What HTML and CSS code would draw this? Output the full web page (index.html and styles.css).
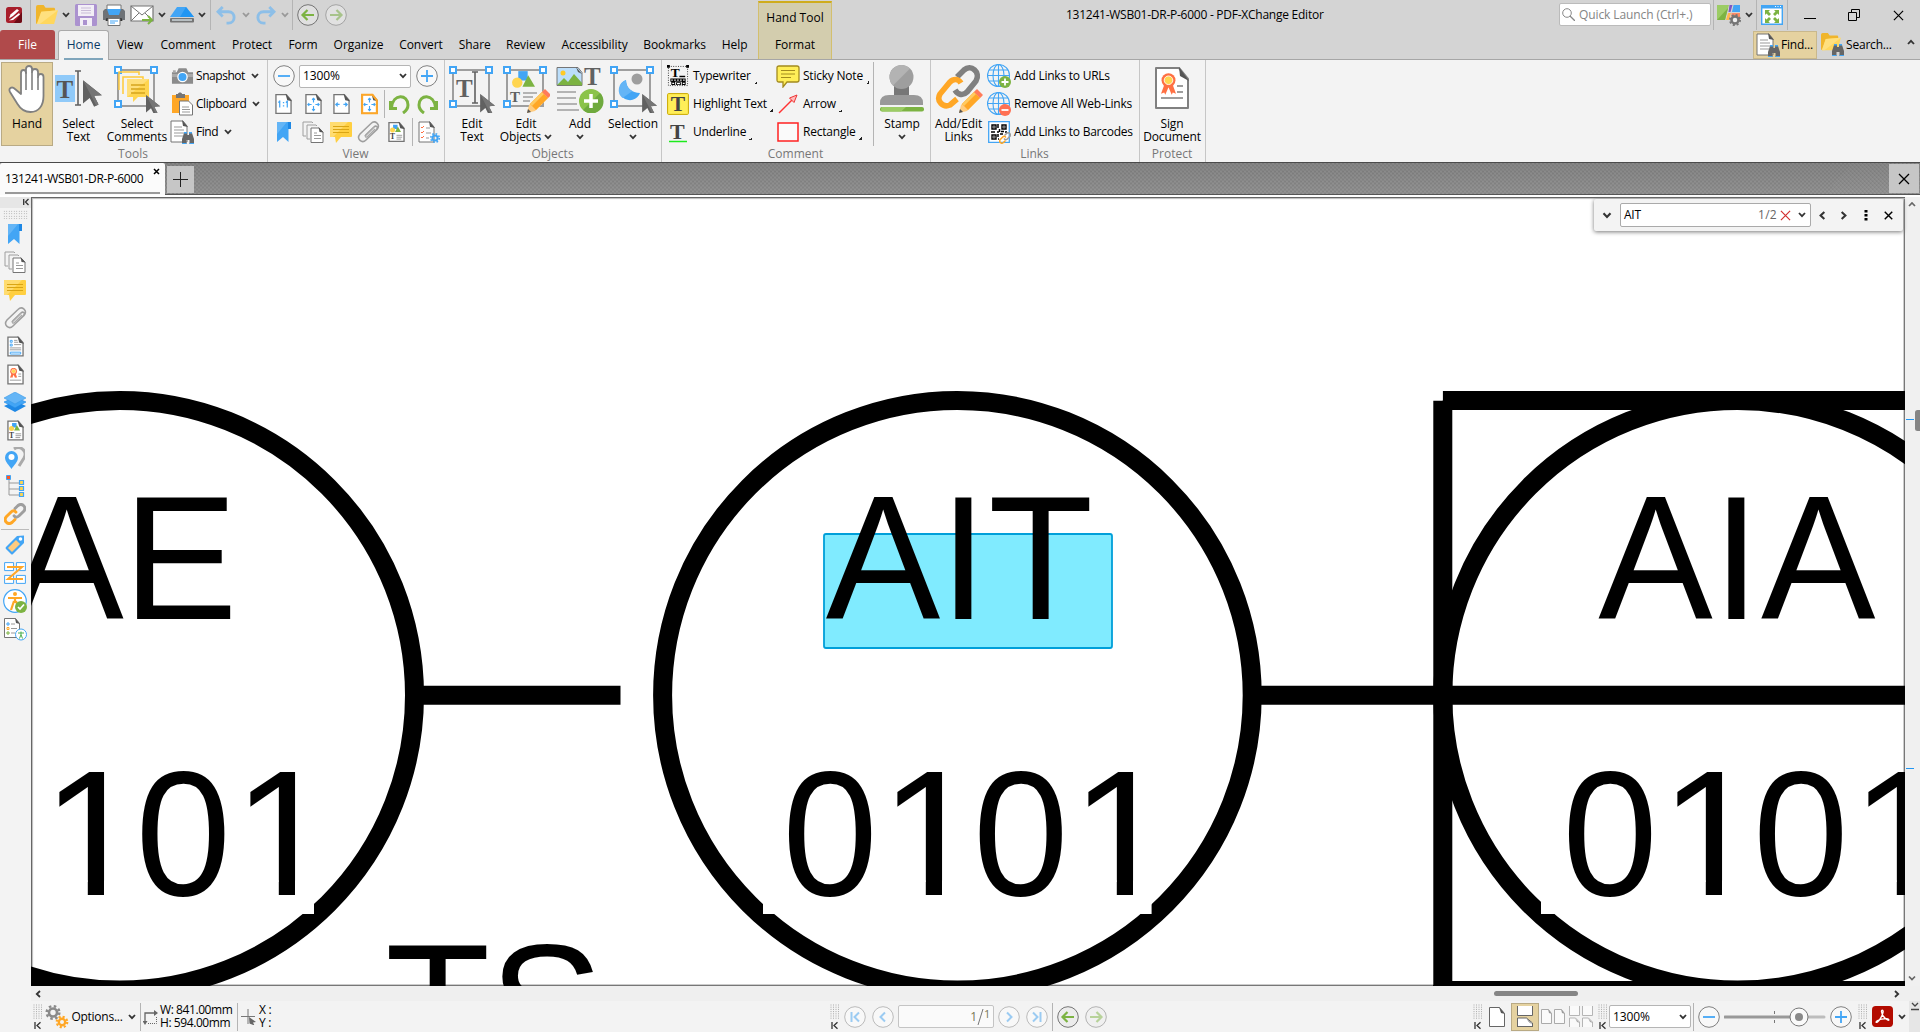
FILE: index.html
```html
<!DOCTYPE html>
<html lang="en">
<head>
<meta charset="utf-8">
<title>131241-WSB01-DR-P-6000 - PDF-XChange Editor</title>
<link rel="stylesheet" href="styles.css">
</head>
<body>
<svg class="defs" aria-hidden="true">
  <defs>
    <symbol id="chev" viewBox="0 0 8 6"><path d="M1 1l3 3.2L7 1" fill="none" stroke="currentColor" stroke-width="1.8"/></symbol>
    <symbol id="x" viewBox="0 0 12 12"><path d="M1 1l10 10M11 1L1 11" fill="none" stroke="currentColor" stroke-width="1.3"/></symbol>
    <symbol id="grip" viewBox="0 0 10 26"><path d="M1 .5v15M3.5 .5v15M6 .5v15M8.500 .5v15" stroke="#aaa" stroke-dasharray="1 1.2"/><path d="M2 18v7" stroke="#333" stroke-width="1.3"/><path d="M7.500 18.300L4 21.500l3.500 3.200" fill="none" stroke="#333" stroke-width="1.3"/></symbol>
    <symbol id="cursor" viewBox="0 0 18 24"><path d="M0 0l17 13.500-7 .5 4 8-4 2-4-8-6 5z" fill="#616161"/><path d="M0 0l17 13.500-7 .5 4 8-2 1z" fill="#757575"/></symbol>
    <symbol id="bino" viewBox="0 0 12 12"><path d="M2 1h3v2h2V1h3l2 6v5H7.500V8h-3v4H0V7z" fill="#666"/><path d="M2 0h3v1.500H2zM7 0h3v1.500H7zM0 11h4.500v1H0zM7.500 11H12v1H7.500z" fill="#42a5f5"/></symbol>
    <symbol id="pencil" viewBox="0 0 24 24"><path d="M0 24l2-8L17 1l6 6L8 22z" fill="#ffcc80"/><path d="M3 15L15 3l6 6L9 21z" fill="#ffa726"/><path d="M3 15L15 3l2 2L5 17z" fill="#ffca60"/><path d="M15 3l3-3 6 6-3 3z" fill="#ff7b5a"/><path d="M0 24l1-4 3 3z" fill="#555"/></symbol>
    <symbol id="page" viewBox="0 0 18 22"><path d="M1 1h11l5 6v14H1z" fill="#fff" stroke="#757575" stroke-width="1.400"/><path d="M11 0l7 8-5-1z" fill="#555"/></symbol>
    <symbol id="frame" viewBox="0 0 48 48"><path d="M5 5h36v36H5z" fill="none" stroke="#9e9e9e" stroke-width="2"/><path d="M2 2h6v6H2zM38 2h6v6h-6zM2 36h6v6H2z" fill="#fff" stroke="#42a5f5" stroke-width="2"/></symbol>
    <symbol id="shapes" viewBox="0 0 22 17"><path d="M6 0h9v9H6z" fill="#42a5f5"/><circle cx="5" cy="11" r="5" fill="#ffd54f"/><path d="M10 15L15.500 4 22 15z" fill="#7cb342"/></symbol>

    <symbol id="logo" viewBox="0 0 16 16"><rect width="16" height="16" rx="2.500" fill="#a81e2b"/><path d="M8 16L16 5v8.500a2.500 2.500 0 0 1-2.500 2.500z" fill="#6d0b15"/><path d="M3 11.500l1.500-4L11 2l2 1.500-6 5.500z" fill="#fff"/><path d="M3 13.500l3-2L13 6l1 1.500L7 13z" fill="#fff"/></symbol>
    <symbol id="folder" viewBox="0 0 24 22"><path d="M1 2q0-2 2-2h6l2 3h9q1 0 1 2v3H1z" fill="#f0b52c"/><path d="M1 4v14q0 2 1.500 2L7 8z" fill="#f0b52c"/><path d="M6.500 7L24 5.500 20 20H2z" fill="#ffd75e"/><path d="M6.500 7L24 5.500 5 20H2z" fill="#ffe07f"/></symbol>
    <symbol id="save" viewBox="0 0 22 22"><rect width="22" height="22" rx="1.500" fill="#ab92cf"/><path d="M3 1h16v11H3zM5 14h12v8H5z" fill="#f2eef6"/><path d="M6 4h10M6 6.500h10M6 9h10" stroke="#c9bcd8"/><path d="M8 16h4v5H8z" fill="#ab92cf"/></symbol>
    <symbol id="printer" viewBox="0 0 22 22"><path d="M4 1h14v6H4z" fill="#fff" stroke="#757575"/><path d="M2 5h18l2 2v9H0V7z" fill="#6e7276"/><path d="M4 5h14l-2 6H6z" fill="#42a5f5"/><path d="M3.500 14h15l1 3h-17z" fill="#333"/><path d="M5 14.500h12V21.500H5z" fill="#fff" stroke="#757575"/><path d="M7 17h8M7 19h5" stroke="#42a5f5"/></symbol>
    <symbol id="mail" viewBox="0 0 24 20"><path d="M1 1h22v15H1z" fill="#fff" stroke="#757575" stroke-width="1.200"/><path d="M1 1l11 9L23 1M1 16l8-8M23 16l-8-8" fill="none" stroke="#757575"/><path d="M12 15h9M18 11l4 4-4 4" fill="none" stroke="#7cb342" stroke-width="2"/></symbol>
    <symbol id="scan" viewBox="0 0 24 16"><path d="M7 0h9l8 10H0z" fill="#42a5f5"/><path d="M16 0l8 10H10z" fill="#2196f3"/><rect y="11" width="24" height="4.500" rx="1" fill="#757575"/><path d="M2 13h20" stroke="#cfd8dc" stroke-width="1.500"/></symbol>
    <symbol id="undo" viewBox="0 0 22 20"><path d="M7 1L2 6l5 5M2.500 6H13c8 0 8 12 0 12h-2" fill="none" stroke="#8dbfe8" stroke-width="3"/></symbol>
    <symbol id="back" viewBox="0 0 22 22"><circle cx="11" cy="11" r="10.300" fill="#e8e8e8" fill-opacity=".6" stroke="#757575"/><path d="M17 11H6M10.500 6L5.500 11l5 5" fill="none" stroke="#7cb342" stroke-width="2.200"/></symbol>
    <symbol id="fwd" viewBox="0 0 22 22"><g opacity=".5"><circle cx="11" cy="11" r="10.300" fill="#eee" stroke="#757575"/><path d="M5 11h11M11.500 6l5 5-5 5" fill="none" stroke="#7cb342" stroke-width="2.200"/></g></symbol>
    <symbol id="lens" viewBox="0 0 13 13"><circle cx="5" cy="5" r="4.300" fill="none" stroke="#888"/><path d="M8 8l5 5" stroke="#888" stroke-width="1.300"/></symbol>
    <symbol id="themes" viewBox="0 0 24 22"><path d="M0 1h12L8 16H0z" fill="#9ccc65"/><path d="M0 16L11 4 8 16z" fill="#7cb342"/><path d="M12.500 1h3l-2 7h-2z" fill="#7e57c2"/><path d="M16.500 1H23v7h-8z" fill="#42a5f5"/><path d="M11 9h3l-2 7H9z" fill="#ffb74d"/><path d="M14.500 9H23v7h-9z" fill="#ff8a65"/><circle cx="18" cy="16" r="3.500" fill="#eee" stroke="#757575" stroke-width="2.500"/><circle cx="18" cy="16" r="5" fill="none" stroke="#757575" stroke-width="2" stroke-dasharray="2 1.930"/></symbol>
    <symbol id="full" viewBox="0 0 22 20"><path d="M.7 .7h20.600v18.600H.7z" fill="#fff" stroke="#42a5f5" stroke-width="1.400"/><path d="M0 0h22v3.500H0z" fill="#42a5f5"/><path d="M14 1.500h6" stroke="#fff" stroke-dasharray="1 1.500"/><path d="M4 5h5L7.500 6.500 10 9 8 11 5.500 8.500 4 10zM18 5h-5l1.500 1.500L12 9l2 2 2.500-2.500L18 10zM4 18h5l-1.500-1.500L10 14l-2-2-2.500 2.500L4 13zM18 18h-5l1.500-1.500L12 14l2-2 2.500 2.500L18 13z" fill="#7cb342"/></symbol>

    <symbol id="hand" viewBox="0 0 38 48"><path d="M13 29V8c0-4 5-4 5 0V4c0-4 6-4 6 0v3c0-4 6-4 6 0v5c0-4 5.500-4 5.500 0v19c0 10-5 16-13 16-6 0-10-3-13-8L2 27c-2-4 2-6 5-3z" fill="#fff" stroke="#808080" stroke-width="1.800" stroke-linejoin="round"/><path d="M18 7v18M24 7v18M30 12v13" stroke="#808080" stroke-width="1.600"/></symbol>
    <symbol id="seltext" viewBox="0 0 48 48"><path d="M0 10h20v27H0z" fill="#90caf9"/><text x="1.500" y="33" class="g-serif" font-size="25" fill="#555">T</text><path d="M20 6h6M20 40h6M23 6v34" stroke="#616161" stroke-width="1.600"/><use href="#cursor" x="28" y="11" width="20" height="35"/></symbol>
    <symbol id="selcom" viewBox="0 0 48 48"><use href="#frame" width="48" height="48"/><path d="M6 25V7h20v3M10 29V12h20v3" fill="none" stroke="#ffca3a" stroke-width="1.500"/><path d="M14 14h22v18H25l-5 5v-5h-6z" fill="#ffd54f"/><path d="M14 32L36 14H14z" fill="#ffdf7a"/><path d="M18 20h14M18 24h14M18 28h14" stroke="#d6a51e" stroke-width="1.300"/><use href="#cursor" x="33" y="30" width="15" height="20"/></symbol>
    <symbol id="camera" viewBox="0 0 24 18"><path d="M1 5h5l2-4h8l2 4h5v12H1z" fill="#8b8b8b"/><path d="M2 3h3v2H2zM1 7h22v3H1z" fill="#aaa"/><circle cx="12" cy="10" r="5.500" fill="#fff"/><circle cx="12" cy="10" r="4.200" fill="#42a5f5"/></symbol>
    <symbol id="clipb" viewBox="0 0 22 24"><path d="M1 3h17v18H1z" fill="#ffa726"/><path d="M5 2h2c0-2 4-2 4 0h3v4H5z" fill="#757575"/><path d="M8.500 9h9l4 4v10h-13z" fill="#fff" stroke="#757575"/><path d="M11 15h7M11 17.500h8M11 20h8" stroke="#999"/></symbol>
    <symbol id="finddoc" viewBox="0 0 24 24"><path d="M1 1h12l4 5v16H1z" fill="#fff" stroke="#757575"/><path d="M12 0l6 7-5-1z" fill="#555"/><path d="M4 7h8M4 10h10M4 13h10M4 16h9" stroke="#999"/><use href="#bino" x="12" y="12" width="12" height="12"/></symbol>
    <symbol id="minus" viewBox="0 0 22 22"><circle cx="11" cy="11" r="10.300" fill="#f8f8f8" stroke="#808080"/><path d="M5 11h12" stroke="#42a5f5" stroke-width="1.800"/></symbol>
    <symbol id="plus" viewBox="0 0 22 22"><circle cx="11" cy="11" r="10.300" fill="#f8f8f8" stroke="#808080"/><path d="M5 11h12M11 5v12" stroke="#42a5f5" stroke-width="1.800"/></symbol>
    <symbol id="p11" viewBox="0 0 18 22"><use href="#page" width="18" height="22"/><path d="M5 8v6M13 8v6M4 9l1-1M12 9l1-1M9 9.500h.1M9 13h.1" stroke="#42a5f5" stroke-width="1.300" stroke-linecap="square"/></symbol>
    <symbol id="pall" viewBox="0 0 18 22"><use href="#page" width="18" height="22"/><path d="M9 5v4.500M9 13v5M3 11.500h4M11 11.500h4M7.500 6.500L9 5l1.500 1.500M7.500 16.500L9 18l1.500-1.500M4.500 10L3 11.500 4.500 13M13.500 10l1.500 1.500-1.500 1.500" fill="none" stroke="#42a5f5" stroke-width="1.200"/></symbol>
    <symbol id="pwid" viewBox="0 0 18 22"><use href="#page" width="18" height="22"/><path d="M3 11.500h4M11 11.500h4M5 9.500l-2 2 2 2M13 9.500l2 2-2 2" fill="none" stroke="#42a5f5" stroke-width="1.300"/></symbol>
    <symbol id="pvis" viewBox="0 0 18 22"><use href="#pall" width="18" height="22"/><path d="M1.200 1.200h11l4.600 6v13.600H1.200z" fill="none" stroke="#ffa726" stroke-width="2.200"/></symbol>
    <symbol id="rot" viewBox="0 0 22 20"><path d="M2.500 7v7.500H9M3.500 13.500C5-1 20 0 20 11c0 4-2 6-5 8" fill="none" stroke="#7cb342" stroke-width="3"/></symbol>
    <symbol id="bm" viewBox="0 0 16 22"><path d="M1 1h10v0h4v7h-2.500v13L7 16l-6 5z" fill="#42a5f5"/><path d="M1 1h10L1 13z" fill="#64b5f6"/><path d="M12 1h3v7h-3z" fill="#1e88e5"/></symbol>
    <symbol id="pages" viewBox="0 0 22 22"><path d="M4 15H1V1h9l1 1M8 18H5V4h9l1 1" fill="none" stroke="#9e9e9e"/><path d="M9 7h8l4 4v10.500H9z" fill="#fff" stroke="#757575"/><path d="M16.500 6l5 5.500-4-.5z" fill="#555"/><path d="M12 12h3M12 14.500h7M12 17.500h7" stroke="#999"/></symbol>
    <symbol id="comm" viewBox="0 0 22 21"><rect width="22" height="15" rx="1" fill="#ffcf40"/><path d="M5 15h6l-5 6z" fill="#ffcf40"/><path d="M1 0h17L3 15H0V1z" fill="#ffdc70"/><path d="M3 4.500h16M3 7.500h16M3 10.500h16" stroke="#d9a514"/></symbol>
    <symbol id="clip" viewBox="0 0 23 22"><path d="M8 15L17 6c2-2 4.500 0 2.500 2.500L9 19c-4 4-10-1-6-6L14 2.500c4-4 10 1 6 6L11 17" fill="none" stroke="#9e9e9e" stroke-width="1.500"/><path d="M17 6L9 13.500c-2 2 0 3.500 1.500 2L18 8" fill="none" stroke="#aaa" stroke-width="1.200"/></symbol>
    <symbol id="content" viewBox="0 0 18 22"><use href="#page" width="18" height="22"/><use href="#shapes" x="2" y="3" width="12" height="9"/><text x="2" y="18.500" class="g-serif" font-size="8" fill="#444">T</text><path d="M9 14.500h6M9 16.500h6M9 18.500h5" stroke="#999"/></symbol>
    <symbol id="docset" viewBox="0 0 22 22"><path d="M1 1h11l4 5v15H1z" fill="#fff" stroke="#757575"/><path d="M11 0l6 7-5-1z" fill="#555"/><path d="M3 6l1 1 2-2M3 11l1 1 2-2M3 16l1 1 2-2" fill="none" stroke="#ff7043"/><path d="M8 7h4M8 12h5M8 17h3" stroke="#999"/><circle cx="17" cy="17" r="2.600" fill="none" stroke="#42a5f5" stroke-width="2"/><circle cx="17" cy="17" r="4.300" fill="none" stroke="#42a5f5" stroke-width="1.500" stroke-dasharray="1.700 1.680"/></symbol>
    <symbol id="edtext" viewBox="0 0 48 48"><use href="#frame" width="48" height="48"/><text x="8" y="32" class="g-serif" font-size="25" fill="#616161">T</text><path d="M24 7h6M24 38h6M27 7v31" stroke="#616161" stroke-width="1.600"/><use href="#cursor" x="32" y="29" width="16" height="21"/></symbol>
    <symbol id="edobj" viewBox="0 0 48 48"><use href="#frame" width="48" height="48"/><use href="#shapes" x="10" y="6" width="23" height="18"/><text x="8" y="37" class="g-serif" font-size="15" fill="#616161">T</text><path d="M21 28h14M21 32h10M21 36h7" stroke="#9e9e9e" stroke-width="1.500"/><use href="#pencil" x="25" y="24" width="24" height="24"/></symbol>
    <symbol id="add" viewBox="0 0 48 48"><path d="M1 2.500h21l4 5v13H1z" fill="#bbdefb" stroke="#757575"/><circle cx="7" cy="8" r="2.500" fill="#ffca28"/><path d="M1 20l7-7 4 4 6-8 8 9v2.500z" fill="#7cb342"/><path d="M20 2l6 7-4-2z" fill="#555"/><text x="28" y="20" class="g-serif" font-size="25" fill="#616161">T</text><path d="M1 27h19M1 33h19M1 39h20M1 45h22" stroke="#9e9e9e" stroke-width="1.700"/><circle cx="35" cy="36" r="12" fill="#8bc34a"/><path d="M27 45a12 12 0 0 0 17-17z" fill="#6faa3e"/><path d="M28 36h14M35 29v14" stroke="#fff" stroke-width="3.500"/></symbol>
    <symbol id="selobj" viewBox="0 0 48 48"><use href="#frame" width="48" height="48"/><circle cx="28" cy="14" r="5.500" fill="#9e9e9e"/><path d="M17 15a10.500 10.500 0 1 0 14 13c-8 0-14-5-14-13z" fill="#42a5f5"/><path d="M17 15a10.500 10.500 0 0 0-3.500 18l10-7c-4-2-6.500-6-6.500-11z" fill="#64b5f6"/><use href="#cursor" x="33" y="29" width="16" height="21"/></symbol>
    <symbol id="typew" viewBox="0 0 23 23"><path d="M1.500 1.500h20v20h-20z" fill="none" stroke="#333" stroke-dasharray="1 1.500"/><path d="M0 0h3v3H0zM20 0h3v3h-3z" fill="#000"/><text x="4" y="13" class="g-serif" font-size="14">T</text><path d="M13 12h6" stroke="#000" stroke-width="1.500"/><path d="M3.500 14h16v3.500h-16zM4.500 17.500h4v3.500h-4zM9.500 18h5v3h-5zM15.500 17.500h4v3.500h-4z"/><path d="M4.500 15.800h14" stroke="#fff" stroke-width="1.400" stroke-dasharray="1.500 1.600"/><path d="M5.500 19.300h2M10.500 19.500h3M16.500 19.300h2" stroke="#fff" stroke-width="1.300"/></symbol>
    <symbol id="hilite" viewBox="0 0 22 22"><rect x=".6" y=".6" width="20.800" height="20.800" rx="1" fill="#ffee58" stroke="#c9a800"/><text x="3.700" y="18" class="g-serif" font-size="21.500" fill="#444">T</text></symbol>
    <symbol id="uline" viewBox="0 0 20 21"><text x="2" y="16.500" class="g-serif" font-size="22" fill="#444">T</text><path d="M1 19.500h18" stroke="#1dea1d" stroke-width="1.500"/></symbol>
    <symbol id="sticky" viewBox="0 0 24 23"><path d="M3 1h18q2 0 2 2v12q0 2-2 2H11l-4 5v-5H3q-2 0-2-2V3q0-2 2-2z" fill="#ffee58" stroke="#a38b1e" stroke-width="1.300"/><path d="M5 5.500h14M5 9h14M5 12.500h10" stroke="#a38b1e" stroke-width="1.200"/></symbol>
    <symbol id="arrow" viewBox="0 0 20 20"><path d="M1 19L17 3" stroke="#f33" stroke-width="1.400"/><path d="M19 1l-7.500 3L16 8.500z" fill="#fbb" stroke="#e33"/></symbol>
    <symbol id="rect" viewBox="0 0 22 20"><path d="M1 1h20v18H1z" fill="#fafafa" stroke="#f22" stroke-width="1.500"/></symbol>
    <symbol id="stamp" viewBox="0 0 46 48"><path d="M15 20c4 4 11 4 15 0v10H15z" fill="#777"/><circle cx="22.500" cy="12" r="12" fill="#9e9e9e"/><path d="M31 3.500A12 12 0 0 0 14 20.500z" fill="#b3b3b3"/><path d="M1 40v-2q0-8 9-8h25q9 0 9 8v2z" fill="#999"/><rect x="1" y="42" width="44" height="4.500" rx="2" fill="#7cb342"/><path d="M3 42h24l-5 4.500H3q-2-2 0-4.500z" fill="#9ccc65"/></symbol>
    <symbol id="link" viewBox="0 0 24 24"><g fill="none" stroke-width="3.200" stroke-linecap="round"><path d="M12 6l3-3c5-4 10 2 6.500 6l-5 5c-2 2-4 2-5.500 0" stroke="#9e9e9e"/><path d="M12 18l-3 3c-5 4-10-2-6.500-6l5-5c2-2 4-2 5.500 0" stroke="#ffa726"/></g></symbol>
    <symbol id="biglink" viewBox="0 0 48 48"><g fill="none" stroke-width="5.600"><path d="M22 12l7-7c7-6 17 2 12 11l-9 11c-4 4-9 3-12-2" stroke="#808080"/><path d="M26 18c-3-5-8-4-11-1L5 29c-4 7 3 14 10 11l7-6" stroke="#ffa726"/></g><use href="#pencil" x="24" y="24" width="24" height="24"/></symbol>
    <symbol id="globe" viewBox="0 0 24 24"><g fill="none" stroke="#42a5f5" stroke-width="1.100"><circle cx="11.500" cy="11.500" r="11"/><ellipse cx="11.500" cy="11.500" rx="5.500" ry="11"/><path d="M.5 11.500h22M11.500.5v22M2 6h19M2 17h19"/></g></symbol>
    <symbol id="urladd" viewBox="0 0 24 24"><use href="#globe" width="24" height="24"/><circle cx="18" cy="18" r="6" fill="#7cb342"/><path d="M14.500 18h7M18 14.500v7" stroke="#fff" stroke-width="1.800"/></symbol>
    <symbol id="urldel" viewBox="0 0 24 24"><use href="#globe" width="24" height="24"/><circle cx="18" cy="18" r="6" fill="#ff7052"/><path d="M14.500 18h7" stroke="#fff" stroke-width="1.800"/></symbol>
    <symbol id="qr" viewBox="0 0 24 24"><path d="M1.700 1.700h20.600v20.600H1.700z" fill="#fff" stroke="#42a5f5" stroke-width="1.300"/><path d="M5 5h4v4H5zM15 5h4v4h-4zM5 15h4v4H5z" fill="#fff" stroke="#000" stroke-width="1.400"/><path d="M6.300 6.300h1.400v1.400H6.300zM16.300 6.300h1.400v1.400h-1.400zM6.300 16.300h1.400v1.400H6.300z"/><path d="M11 4v4M12.500 9v3M4 12h4M10 12h2M14 11.500h3M18 12h2M11 14v3M13 14h3M11 19h1" stroke="#000" stroke-width="1.500"/><use href="#link" x="12" y="12" width="12" height="12"/></symbol>
    <symbol id="seal" viewBox="0 0 14 20"><path d="M3 11L0 19l3-1 1 2 3-7 3 7 1-2 3 1-3-8z" fill="#ff7043"/><circle cx="7" cy="6.500" r="6.500" fill="#ff7043"/><circle cx="7" cy="6.500" r="4" fill="#ffd54f" stroke="#fff" stroke-width=".8"/></symbol>
    <symbol id="signdoc" viewBox="0 0 34 48"><path d="M1 3h23l9 11v29H1z" fill="#fff" stroke="#808080" stroke-width="2" stroke-linejoin="round"/><path d="M24 2l10 14-9-5z" fill="#555"/><use href="#seal" x="6" y="8" width="15" height="22"/><path d="M22 21h6M22 27h6M6 33h22" stroke="#9e9e9e" stroke-width="2"/></symbol>
    <symbol id="fields" viewBox="0 0 18 22"><use href="#page" width="18" height="22"/><path d="M3.500 4.500h2v2h-2zM3.500 8.500h2v2h-2zM3.500 17h11v2h-11z" fill="#fff" stroke="#42a5f5"/><path d="M7.500 4.500H11M7.500 6.500H12M7.500 9H15M3 12.500h12M3 14.500h12" stroke="#999"/></symbol>
    <symbol id="sigp" viewBox="0 0 18 22"><use href="#page" width="18" height="22"/><use href="#seal" x="3" y="4" width="8" height="11"/><path d="M12 10.500h3M12 13h3M3 17h12" stroke="#999"/></symbol>
    <symbol id="layers" viewBox="0 0 22 20"><path d="M0 14l11-5 11 5-11 6z" fill="#1e88e5"/><path d="M0 10l11-5 11 5-11 6z" fill="#42a5f5" stroke="#1e88e5" stroke-width=".6"/><path d="M0 6l11-6 11 6-11 6z" fill="#64b5f6" stroke="#3a9ae8" stroke-width=".6"/></symbol>
    <symbol id="dest" viewBox="0 0 20 22"><path d="M9 2c6-4 14 2 10 9l-5 8" fill="none" stroke="#aaa" stroke-width="3"/><path d="M6.500 4a6.500 6.500 0 0 0-6.500 6.500C0 15 4 18 6.500 22 9 18 13 15 13 10.500A6.500 6.500 0 0 0 6.500 4z" fill="#42a5f5"/><circle cx="6.500" cy="10" r="3" fill="#fff"/></symbol>
    <symbol id="tree" viewBox="0 0 20 22"><path d="M4 4v16h11M4 8h11M4 14h11" fill="none" stroke="#999"/><path d="M1.500.5h4v4h-4z" fill="#ff5722" stroke="#42a5f5"/><path d="M14.500 5.500h4v4h-4zM14.500 11.500h4v4h-4zM14.500 17.500h4v4h-4z" fill="#ffd54f" stroke="#42a5f5" stroke-width="1.200"/></symbol>
    <symbol id="tag" viewBox="0 0 20 20"><path d="M1 12L12 1l7-.5L19 8 8 19q-1 1-2 0l-5-5q-1-1 0-2z" fill="#42a5f5"/><path d="M3 13l8-8 4 4-8 8z" fill="#ffcc80"/><circle cx="15.500" cy="4" r="1.800" fill="#fff"/></symbol>
    <symbol id="order" viewBox="0 0 22 22"><path d="M.6.6h9v8h-9zM12.400.6h9v8h-9zM.6 13.400h9v8h-9zM12.400 13.400h9v8h-9z" fill="#fff" stroke="#42a5f5"/><path d="M3 5h15L4 17h15" fill="none" stroke="#ffa726" stroke-width="2"/></symbol>
    <symbol id="acc" viewBox="0 0 24 24"><circle cx="12" cy="12" r="11.300" fill="#fff" stroke="#42a5f5" stroke-width="1.200"/><circle cx="12" cy="5" r="2" fill="#ffa726"/><path d="M5 9h14M12 8v6M11 12l-3 9M13 12l2 6" stroke="#ffa726" stroke-width="2.200" fill="none"/><circle cx="18" cy="18" r="6" fill="#7cb342"/><path d="M15 18l2 2 4-4.500" fill="none" stroke="#fff" stroke-width="1.700"/></symbol>
    <symbol id="accrep" viewBox="0 0 24 24"><path d="M1.500 1.500h11l4 5v14h-15z" fill="#fff" stroke="#757575"/><path d="M12 1l5 6-4-1z" fill="#555"/><path d="M4 6h2v2H4z" fill="none" stroke="#42a5f5"/><path d="M4 10.500h2v2H4z" fill="none" stroke="#ffa726"/><path d="M4 15h2v2H4z" fill="none" stroke="#7cb342"/><path d="M8 7h4M8 11.500h6M8 16h4" stroke="#999"/><circle cx="18" cy="17.500" r="5.500" fill="#fff" stroke="#42a5f5"/><path d="M15 16h6M18 14.500v3l-1.500 4M18 17.500l1.500 4" fill="none" stroke="#4caf50"/></symbol>
    <symbol id="gears" viewBox="0 0 24 26"><g fill="none"><circle cx="8" cy="8.500" r="4" stroke="#8a8a8a" stroke-width="2.600"/><circle cx="8" cy="8.500" r="6.300" stroke="#8a8a8a" stroke-width="2.500" stroke-dasharray="2.500 2.450"/><circle cx="17" cy="18" r="3.200" stroke="#ffa726" stroke-width="2.400"/><circle cx="17" cy="18" r="5.200" stroke="#ffa726" stroke-width="2.300" stroke-dasharray="2.100 1.980"/></g></symbol>
    <symbol id="dims" viewBox="0 0 16 16"><path d="M2 13V4h10" fill="none" stroke="#666" stroke-width="1.300"/><path d="M11 1l4 3-4 3zM-.5 12L2 16l2.500-4z" fill="#666"/><path d="M5 14.500h8.500V7" fill="none" stroke="#666" stroke-dasharray="1 1"/></symbol>
    <symbol id="cross" viewBox="0 0 16 16"><path d="M0 7.500h14M7 0v15" stroke="#777"/><path d="M8 8l7 5-3 .5 1.500 3-5-2z" fill="#666"/></symbol>
    <symbol id="first" viewBox="0 0 22 22"><circle cx="11" cy="11" r="10.300" fill="#f8f8f8" stroke="#bbb"/><path d="M7.500 6v10M15 6.500L10.500 11l4.500 4.500" fill="none" stroke="#9bcbf2" stroke-width="2"/></symbol>
    <symbol id="prev" viewBox="0 0 22 22"><circle cx="11" cy="11" r="10.300" fill="#f8f8f8" stroke="#bbb"/><path d="M13 6.500L8.500 11l4.500 4.500" fill="none" stroke="#9bcbf2" stroke-width="2"/></symbol>
    <symbol id="onep" viewBox="0 0 16 20"><path d="M.5.500h10l5 6v13H.5z" fill="#fff" stroke="#666"/><path d="M10 0l6 7-4-1z" fill="#555"/></symbol>
    <symbol id="cont" viewBox="0 0 16 21"><path d="M.5 0v9.500h15V0M.5 21v-9h9l6 5v4M.5 20.500h15" fill="#fff" stroke="#666"/><path d="M9 12l7 7-4-3z" fill="#555"/></symbol>
    <symbol id="twop" viewBox="0 0 24 15"><path d="M.5.500h7l3 4v10H.5zM13.500.500h7l3 4v10h-10z" fill="#fafafa" stroke="#aaa"/><path d="M7 0l4 5-3-1zM20 0l4 5-3-1z" fill="#999"/></symbol>
    <symbol id="fourp" viewBox="0 0 24 21"><path d="M.5 0v9.500h10V0M13.500 0v9.500h10V0M.5 21v-9h6l4 4v5M13.500 21v-9h6l4 4v5" fill="#fafafa" stroke="#b5b5b5"/><path d="M6 12l5 5-3-1zM19 12l5 5-3-1z" fill="#aaa"/></symbol>
    <symbol id="adobe" viewBox="0 0 20 20"><rect width="20" height="20" rx="3.500" fill="#b30b00"/><path d="M4 15.500c-1-2 11-5 12-2.500.5 2-6.500-2-7-8 .5-2 2-1 1.500 1C10 9 6.500 15.500 4.500 15.500z" fill="none" stroke="#fff" stroke-width="1.300"/></symbol>
  </defs>
</svg>

<div class="app">
  <header class="top">
    <div class="quick">
      <svg width="16" height="16"><use href="#logo"/></svg><i class="sep"></i>
      <svg width="23" height="21"><use href="#folder"/></svg><svg class="chev"><use href="#chev"/></svg>
      <svg width="22" height="22"><use href="#save"/></svg>
      <svg width="22" height="22"><use href="#printer"/></svg>
      <svg width="24" height="20"><use href="#mail"/></svg><svg class="chev"><use href="#chev"/></svg>
      <svg width="24" height="16"><use href="#scan"/></svg><svg class="chev"><use href="#chev"/></svg><i class="sep"></i>
      <svg width="21" height="19"><use href="#undo"/></svg><svg class="chev dim"><use href="#chev"/></svg>
      <svg width="21" height="19" class="flip"><use href="#undo"/></svg><svg class="chev dim"><use href="#chev"/></svg><i class="sep"></i>
      <svg width="22" height="22"><use href="#back"/></svg>
      <svg width="22" height="22"><use href="#fwd"/></svg>
    </div>
    <div class="ctx">Hand Tool</div>
    <div class="title">131241-WSB01-DR-P-6000 - PDF-XChange Editor</div>
    <div class="launch"><svg width="13" height="13"><use href="#lens"/></svg>Quick Launch (Ctrl+.)</div>
    <div class="winbtns">
      <i class="sep"></i><svg width="24" height="22"><use href="#themes"/></svg><svg class="chev"><use href="#chev"/></svg>
      <i class="sep"></i><svg width="22" height="20"><use href="#full"/></svg><i class="sep"></i>
      <svg width="12" height="12"><path d="M0 9.500h12" stroke="#000"/></svg>
      <svg width="12" height="12"><path d="M.5 3.500h8v8h-8zM3.500 3V.5h8v8H9" fill="none" stroke="#000"/></svg>
      <svg width="11" height="11"><use href="#x"/></svg>
    </div>
  </header>
  <nav class="menu">
    <span class="file">File</span><span class="home">Home</span><span>View</span><span>Comment</span><span>Protect</span><span>Form</span><span>Organize</span><span>Convert</span><span>Share</span><span>Review</span><span>Accessibility</span><span>Bookmarks</span><span>Help</span><span class="format">Format</span>
    <div class="menu-right">
      <div class="findbtn"><svg width="24" height="24"><use href="#finddoc"/></svg>Find...</div>
      <div class="searchbtn"><svg width="24" height="24"><svg width="21" height="19" viewBox="0 0 24 22"><use href="#folder"/></svg><use href="#bino" x="12" y="11" width="12" height="12"/></svg>Search...</div>
      <svg class="chev up"><use href="#chev"/></svg>
    </div>
  </nav>

  <section class="ribbon">
    <div class="group tools">
      <div class="body">
        <div class="big on"><svg width="38" height="48"><use href="#hand"/></svg><p>Hand</p></div>
        <div class="big"><svg width="48" height="48"><use href="#seltext"/></svg><p>Select<br>Text</p></div>
        <div class="big"><svg width="48" height="48"><use href="#selcom"/></svg><p>Select<br>Comments</p></div>
        <div class="rows">
          <div class="row"><svg width="23" height="18"><use href="#camera"/></svg><b>Snapshot</b><svg class="chev"><use href="#chev"/></svg></div>
          <div class="row"><svg width="22" height="24"><use href="#clipb"/></svg><b>Clipboard</b><svg class="chev"><use href="#chev"/></svg></div>
          <div class="row"><svg width="24" height="24"><use href="#finddoc"/></svg><b>Find</b><svg class="chev"><use href="#chev"/></svg></div>
        </div>
      </div>
      <h2>Tools</h2>
    </div>
    <div class="group view">
      <div class="body">
        <div class="vrow v1"><svg width="22" height="22"><use href="#minus"/></svg><div class="combo">1300%<svg class="chev"><use href="#chev"/></svg></div><svg width="22" height="22"><use href="#plus"/></svg></div>
        <div class="vrow v2"><svg width="17" height="22"><use href="#p11"/></svg><svg width="17" height="22"><use href="#pall"/></svg><svg width="17" height="22"><use href="#pwid"/></svg><svg width="17" height="22"><use href="#pvis"/></svg><i class="sep"></i><svg width="22" height="20"><use href="#rot"/></svg><svg width="22" height="20" class="flip"><use href="#rot"/></svg></div>
        <div class="vrow v3"><svg width="16" height="22"><use href="#bm"/></svg><svg width="22" height="22"><use href="#pages"/></svg><svg width="22" height="21"><use href="#comm"/></svg><svg width="23" height="22"><use href="#clip"/></svg><svg width="17" height="22"><use href="#content"/></svg><i class="sep"></i><svg width="22" height="22"><use href="#docset"/></svg></div>
      </div>
      <h2>View</h2>
    </div>
    <div class="group objects">
      <div class="body">
        <div class="big"><svg width="48" height="48"><use href="#edtext"/></svg><p>Edit<br>Text</p></div>
        <div class="big"><svg width="48" height="48"><use href="#edobj"/></svg><p>Edit<br>Objects <svg class="chev"><use href="#chev"/></svg></p></div>
        <div class="big"><svg width="48" height="48"><use href="#add"/></svg><p>Add<br><svg class="chev"><use href="#chev"/></svg></p></div>
        <div class="big"><svg width="48" height="48"><use href="#selobj"/></svg><p>Selection<br><svg class="chev"><use href="#chev"/></svg></p></div>
      </div>
      <h2>Objects</h2>
    </div>
    <div class="group comment">
      <div class="body">
        <div class="rows">
          <div class="row"><svg width="22" height="22"><use href="#typew"/></svg><b>Typewriter</b><i class="tri"></i></div>
          <div class="row"><svg width="22" height="22"><use href="#hilite"/></svg><b>Highlight Text</b><i class="tri"></i></div>
          <div class="row"><svg width="20" height="21"><use href="#uline"/></svg><b>Underline</b><i class="tri"></i></div>
        </div>
        <div class="rows">
          <div class="row"><svg width="24" height="23"><use href="#sticky"/></svg><b>Sticky Note</b><i class="tri"></i></div>
          <div class="row"><svg width="20" height="20"><use href="#arrow"/></svg><b>Arrow</b><i class="tri"></i></div>
          <div class="row"><svg width="22" height="20"><use href="#rect"/></svg><b>Rectangle</b><i class="tri"></i></div>
        </div>
        <i class="sep tall"></i>
        <div class="big"><svg width="46" height="48"><use href="#stamp"/></svg><p>Stamp<br><svg class="chev"><use href="#chev"/></svg></p></div>
      </div>
      <h2>Comment</h2>
    </div>
    <div class="group links">
      <div class="body">
        <div class="big"><svg width="48" height="48"><use href="#biglink"/></svg><p>Add/Edit<br>Links</p></div>
        <div class="rows">
          <div class="row"><svg width="24" height="24"><use href="#urladd"/></svg><b>Add Links to URLs</b></div>
          <div class="row"><svg width="24" height="24"><use href="#urldel"/></svg><b>Remove All Web-Links</b></div>
          <div class="row"><svg width="24" height="24"><use href="#qr"/></svg><b>Add Links to Barcodes</b></div>
        </div>
      </div>
      <h2>Links</h2>
    </div>
    <div class="group protect">
      <div class="body"><div class="big"><svg width="34" height="48"><use href="#signdoc"/></svg><p>Sign<br>Document</p></div></div>
      <h2>Protect</h2>
    </div>
  </section>

  <div class="doctabs">
    <div class="doctab"><span>131241-WSB01-DR-P-6000</span><svg width="7" height="7"><path d="M1 1l5 5M6 1L1 6" stroke="#000" stroke-width="1.500"/></svg></div>
    <div class="newtab"><svg width="15" height="15"><path d="M0 7.500h15M7.500 0v15" stroke="#222"/></svg></div>
    <div class="closetab"><svg width="12" height="12"><use href="#x"/></svg></div>
  </div>

  <main class="work">
    <aside class="side">
      <div class="collapse"><svg width="6" height="8"><path d="M.7 1v6M5.500 1l-3 3 3 3" fill="none" stroke="#333" stroke-width="1.300"/></svg></div>
      <div class="dots"></div>
      <div class="ic"><svg width="16" height="22"><use href="#bm"/></svg></div>
      <div class="ic"><svg width="22" height="22"><use href="#pages"/></svg></div>
      <div class="ic"><svg width="22" height="21"><use href="#comm"/></svg></div>
      <div class="ic"><svg width="23" height="22"><use href="#clip"/></svg></div>
      <div class="ic"><svg width="17" height="21"><use href="#fields"/></svg></div>
      <div class="ic"><svg width="17" height="21"><use href="#sigp"/></svg></div>
      <div class="ic"><svg width="22" height="20"><use href="#layers"/></svg></div>
      <div class="ic"><svg width="17" height="21"><use href="#content"/></svg></div>
      <div class="ic"><svg width="20" height="22"><use href="#dest"/></svg></div>
      <div class="ic"><svg width="20" height="22"><use href="#tree"/></svg></div>
      <div class="ic"><svg width="22" height="22"><use href="#link"/></svg></div>
      <hr>
      <div class="ic"><svg width="20" height="20"><use href="#tag"/></svg></div>
      <div class="ic"><svg width="22" height="22"><use href="#order"/></svg></div>
      <div class="ic"><svg width="24" height="24"><use href="#acc"/></svg></div>
      <div class="ic"><svg width="24" height="24"><use href="#accrep"/></svg></div>
    </aside>
    <div class="pane">
      <div class="docrow">
        <div class="doc">
          <svg class="drawing" viewBox="31 197 1874 789" width="1874" height="789">
            <clipPath id="plain-stem">
              <path d="M0 750H1920V880.500H0z"/>
              <path d="M87.800 880h16.200v16H87.800zM278.800 880h16.200v16h-16.200zM925.800 880h16.200v16h-16.200zM1116.800 880h16.200v16h-16.200zM1705.800 880h16.200v16h-16.200zM1896.800 880h16.200v16h-16.200z"/>
            </clipPath>
            <g fill="none" stroke="#000" stroke-width="19">
              <circle cx="119.700" cy="695.300" r="294.800"/>
              <circle cx="957.400" cy="695.300" r="294.800"/>
              <circle cx="1737.600" cy="695.300" r="294.800"/>
              <path d="M1442.800 400.500V1000M1442.800 400.500H1920M1442.800 990.500H1920"/>
              <path d="M420 695.300H620.500M1255 695.300H1920"/>
            </g>
            <path d="M1433 390h9.500v10.500h-9.500z" fill="#fff"/>
            <path d="M34 760H314V914H34zM763 760H1151.600V914H763zM1541 760H1903V914H1541z" fill="#fff"/>
            <rect x="824" y="534" width="288" height="114" rx="2" fill="#80ebff" stroke="#009fd9" stroke-width="1.800"/>
            <g class="letters">
              <g transform="translate(0 619) scale(.973 1)">
                <text x="9.600 126.300">AE</text>
                <text x="848.600 965.500 1015.800">AIT</text>
                <text x="1642.600 1760 1809.800">AIA</text>
              </g>
              <g transform="translate(0 894.500) scale(.965 1)">
                <text class="num" x="140.400">0</text>
                <text class="num" x="810.500 1008.300">00</text>
                <text class="num" x="1618.800 1816.500">00</text>
              </g>
              <g clip-path="url(#plain-stem)">
                <g transform="translate(0 894.500) scale(1.030 1)">
                  <text class="num" x="40.500 225.900">11</text>
                  <text class="num" x="854.100 1039.500">11</text>
                  <text class="num" x="1611.400 1796.800">11</text>
                </g>
              </g>
              <g transform="translate(0 1066.500) scale(.973 1)"><text x="396 502.600">TS</text></g>
            </g>
            <path d="M1433 985H1920V990H1433z"/>
          </svg>
          <div class="findbar">
            <svg class="chev"><use href="#chev"/></svg>
            <div class="findin"><span>AIT</span><em>1/2</em><svg class="red" width="11" height="11"><use href="#x"/></svg><svg class="chev"><use href="#chev"/></svg></div>
            <svg class="chev left"><use href="#chev"/></svg>
            <svg class="chev right"><use href="#chev"/></svg>
            <svg width="4" height="12"><path d="M.5 1h3v2.500h-3zM.5 5h3v2.500h-3zM.5 9h3v2.500h-3z"/></svg>
            <svg width="9" height="9" viewBox="0 0 12 12"><path d="M1 1l10 10M11 1L1 11" stroke="#000" stroke-width="1.900"/></svg>
          </div>
        </div>
        <div class="vbar">
          <svg width="15" height="789"><path d="M4 9l3-3 3 3M4 779.500l3 3 3-3" fill="none" stroke="#666" stroke-width="1.700"/><path d="M1 222.500h8M1 571.500h8" stroke="#2196f3" stroke-width="1.200"/><rect x="10" y="213" width="8" height="21" rx="2.500" fill="#858585"/></svg>
        </div>
      </div>
      <div class="hbar"><svg class="chev left"><use href="#chev"/></svg><i class="thumb"></i><svg class="chev right"><use href="#chev"/></svg></div>
      <footer class="status">
        <div class="s-left">
          <svg width="10" height="26"><use href="#grip"/></svg>
          <svg width="24" height="26"><use href="#gears"/></svg>
          <span>Options...</span><svg class="chev"><use href="#chev"/></svg><i class="sep"></i>
          <svg width="16" height="16"><use href="#dims"/></svg>
          <p class="wh">W: 841.00mm<br>H: 594.00mm</p><i class="sep"></i>
          <svg width="16" height="16"><use href="#cross"/></svg>
          <p>X :<br>Y :</p>
        </div>
        <div class="s-mid">
          <svg width="10" height="26"><use href="#grip"/></svg>
          <svg width="22" height="22"><use href="#first"/></svg>
          <svg width="22" height="22"><use href="#prev"/></svg>
          <div class="pageno"><span>1</span><svg width="7" height="18"><path d="M1 17L6 1" stroke="#777"/></svg><span class="hi">1</span></div>
          <svg width="22" height="22" class="flip"><use href="#prev"/></svg>
          <svg width="22" height="22" class="flip"><use href="#first"/></svg>
          <i class="sep"></i>
          <svg width="22" height="22"><use href="#back"/></svg>
          <svg width="22" height="22"><use href="#fwd"/></svg>
        </div>
        <div class="s-right">
          <svg width="10" height="26"><use href="#grip"/></svg>
          <svg width="16" height="20"><use href="#onep"/></svg>
          <div class="mode"><svg width="16" height="21"><use href="#cont"/></svg></div>
          <svg width="24" height="15"><use href="#twop"/></svg>
          <svg width="24" height="21"><use href="#fourp"/></svg>
          <svg width="10" height="26"><use href="#grip"/></svg>
          <div class="combo">1300%<svg class="chev"><use href="#chev"/></svg></div>
          <i class="sep"></i>
          <svg width="22" height="22"><use href="#minus"/></svg>
          <svg width="102" height="22"><path d="M1 11h66" stroke="#999" stroke-width="3" stroke-linecap="round"/><path d="M84 11h16" stroke="#bdbdbd" stroke-width="3" stroke-linecap="round"/><path d="M50.500 5v3M50.500 14v3" stroke="#777"/><circle cx="75" cy="11" r="9" fill="#fafafa" stroke="#777"/><circle cx="75" cy="11" r="4" fill="#8a8a8a"/></svg>
          <svg width="22" height="22"><use href="#plus"/></svg>
          <svg width="10" height="26"><use href="#grip"/></svg>
          <svg width="21" height="21"><use href="#adobe"/></svg>
          <svg class="chev"><use href="#chev"/></svg>
          <div class="expand"><svg width="8" height="9"><path d="M1 1l3 3 3-3M0 7.500h8" fill="none" stroke="#444" stroke-width="1.300"/></svg></div>
        </div>
      </footer>
    </div>
  </main>
</div>
</body>
</html>
```
FILE: styles.css
```css
* { box-sizing: border-box; }
body {
  margin: 0;
  width: 1920px;
  height: 1032px;
  overflow: hidden;
  background: #d4d4d4;
  color: #000;
  font: 12px/16px "Open Sans", "Noto Sans", sans-serif;
  letter-spacing: -.25px;
  white-space: nowrap;
}
p, h2 { margin: 0; font: inherit; }
b, em { font: inherit; }
svg { display: block; flex: none; }
.defs { position: absolute; width: 0; height: 0; }
.g-serif { font-family: "Liberation Serif", serif; font-weight: bold; }
.sep { display: block; width: 1px; height: 28px; background: #b4b4b4; }
.chev { width: 8px; height: 6px; color: #333; }
.dim { color: #999; }
.flip { transform: scaleX(-1); }
.up { transform: rotate(180deg); }
.left { transform: rotate(90deg); }
.right { transform: rotate(-90deg); }

.app { display: flex; flex-direction: column; height: 1032px; }

/* title bar */
.top { display: flex; height: 30px; }
.top > div { flex: none; }
.quick {
  display: grid;
  grid-template-columns: 28px 5px 26px 14px 26px 30px 26px 14px 26px 14px 2px 30px 10px 28px 12px 3px 28px 28px;
  width: 758px;
  align-items: center;
  justify-items: center;
}
.quick .sep { height: 30px; }
.ctx {
  width: 74px;
  padding-top: 7px;
  text-align: center;
  letter-spacing: 0;
  background: #d3cdae;
  border: 1px solid #d3bf6e;
  border-top: 2px solid #cfac1c;
  border-bottom: 0;
  margin-top: 1px;
}
.title { width: 727px; padding: 7px 0 0 234px; letter-spacing: -.25px; }
.launch {
  display: flex;
  align-items: center;
  gap: 4px;
  width: 152px;
  height: 23px;
  margin-top: 3px;
  padding-left: 2px;
  background: #fff;
  border: 1px solid #bbb;
  border-radius: 2px;
  color: #858585;
  letter-spacing: -.1px;
}
.winbtns {
  display: grid;
  grid-template-columns: 3px 28px 12px 3px 28px 3px 42px 46px 42px;
  margin-left: 1px;
  align-items: center;
  justify-items: center;
}
.winbtns .sep { height: 30px; }

/* menu */
.menu {
  display: grid;
  grid-template-columns: 55px 3px 51px 42px 74px 54px 48px 63px 62px 45.400px 56.200px 82px 78px 42px 2.400px 74px 1fr;
  height: 30px;
  border-bottom: 1px solid #a6a6a6;
}
.menu > span { height: 30px; line-height: 30px; text-align: center; letter-spacing: -.05px; }
.menu .file { background: #b04a4b; color: #fff; border-radius: 3px 3px 0 0; height: 29px; }
.menu .home {
  grid-column: 3;
  color: #0b3a66;
  background: #f3f3f3;
  border: 1px solid #aaa;
  border-bottom: 0;
  border-radius: 3px 3px 0 0;
  background-image: linear-gradient(#7fa5bb, #7fa5bb);
  background-size: 39px 2px;
  background-position: 5px 27px;
  background-repeat: no-repeat;
  line-height: 28px;
}
.menu .format { grid-column: 16; background: #d3cdae; border: solid #d3bf6e; border-width: 0 1px; height: 29px; }
.menu-right { display: flex; justify-content: flex-end; padding-right: 5px; }
.findbtn, .searchbtn { display: flex; align-items: center; letter-spacing: -.2px; }
.findbtn { width: 64px; height: 28px; margin-top: 1px; gap: 1px; padding-left: 2px; background: #e5d2a0; border: 1px solid #c9b88c; }
.searchbtn { width: 90px; gap: 2px; padding-left: 3px; }
.menu-right .chev { margin: 9px 0 0; }

/* ribbon */
.ribbon { display: flex; height: 103px; background: #f3f3f3; border-bottom: 1px solid #4a4a4a; }
.group { display: flex; flex-direction: column; border-right: 1px solid #c6c6c6; }
.group .body { display: flex; height: 86px; padding-top: 2px; }
.group h2 { height: 16px; text-align: center; color: #777; letter-spacing: 0; padding-right: 1px; }
.tools { width: 268px; }
.view { width: 177px; }
.objects { width: 217px; }
.comment { width: 269px; }
.links { width: 209px; }
.protect { width: 66px; }
.big { display: flex; flex-direction: column; align-items: center; height: 84px; padding-top: 3px; }
.big p { margin-top: 3px; line-height: 13px; text-align: center; padding-top: 1px; letter-spacing: -.1px; }
.big p .chev { display: inline-block; vertical-align: 1px; }
.tools .big:nth-child(1) { width: 52px; margin-left: 1px; }
.tools .big:nth-child(2) { width: 51px; }
.tools .big:nth-child(3) { width: 66px; }
.tools .big.on { padding-top: 2px; background: #e5d2a0; border: 1px solid #b9aa84; }
.rows { display: flex; flex-direction: column; }
.row { display: grid; grid-template-columns: 24px auto auto; column-gap: 3px; height: 28px; align-items: center; justify-content: start; justify-items: center; }
.row .chev { margin-left: 4px; }
.tri { width: 3px; height: 3px; margin: 12px 0 0; background: linear-gradient(135deg, transparent 50%, #222 50%); }
.tools .rows { width: 97px; letter-spacing: -.45px; }
.tools .row { column-gap: 2px; }
.view .body { flex-direction: column; }
.vrow { display: grid; height: 28px; align-items: center; justify-items: center; }
.v1 { grid-template-columns: 31px 112px 32px; }
.v2 { grid-template-columns: 31px 28px 28px 28px 3px 26px 32px; }
.v3 { grid-template-columns: 31px 28px 28px 27px 28px 4px 30px; }
.combo {
  display: flex;
  align-items: center;
  justify-content: space-between;
  width: 112px;
  height: 23px;
  padding: 0 3px;
  background: #fff;
  border: 1px solid #b5b5b5;
  border-radius: 2px;
  letter-spacing: -.1px;
}
.objects .big { width: 54px; }
.objects .big:nth-child(4) { width: 52px; }
.comment .rows:nth-child(1) { width: 111px; padding-left: 4px; }
.comment .rows:nth-child(2) { width: 100px; padding-left: 3px; }
.comment .rows { letter-spacing: -.22px; }
.tall { height: 84px; }
.comment .big { width: 56px; }
.links .big { width: 55px; }
.links .rows { padding-left: 1px; letter-spacing: -.24px; }
.protect .big { width: 64px; }

/* document tabs */
.doctabs {
  display: flex;
  height: 34px;
  background:
    repeating-linear-gradient(45deg, rgba(255, 255, 255, .06) 0 1.400px, transparent 1.400px 2.828px),
    repeating-linear-gradient(-45deg, rgba(0, 0, 0, .05) 0 1.400px, transparent 1.400px 2.828px),
    linear-gradient(#808080, #8d8d8d);
  border-bottom: 2px solid #fff;
  box-shadow: inset 0 -1px #555;
}
.doctab {
  display: flex;
  justify-content: space-between;
  width: 165px;
  padding: 8px 5px 0 5px;
  background: linear-gradient(#9a9a9a, #9a9a9a) 5px 29px / 155px 2px no-repeat #fbfbfb;
  border-radius: 2px 2px 0 0;
  letter-spacing: -.38px;
}
.doctab svg { margin-top: -3px; }
.newtab, .closetab { display: grid; place-items: center; height: 27px; margin-top: 3px; background: #c6c6c6; }
.newtab { width: 27px; margin-left: 2px; }
.closetab { width: 30px; height: 29px; margin: 1px 1px 0 auto; }

/* work area */
.work { display: flex; height: 835px; background: #f3f3f3; }
.side { width: 31px; height: 835px; }
.collapse { display: flex; justify-content: flex-end; height: 11px; padding: 1px 2px 0 0; background: #e6e6e6; }
.dots { height: 9px; margin: 2px 3px 1px; background: radial-gradient(circle, #999 35%, transparent 45%) 0 0 / 2.500px 2.500px; }
.ic { display: grid; place-items: center; width: 30px; height: 28px; }
.side hr { height: 1px; margin: 1px 2px 1px 1px; border: 0; background: #bbb; }
.pane { display: flex; flex-direction: column; width: 1889px; }
.docrow { display: flex; height: 789px; }
.doc { position: relative; width: 1874px; background: #fff; box-shadow: inset 1px 1px #666, inset 2px 2px 1px #bbb, inset -1px -1px #777, inset -2px -2px #ccc; }
.letters { font-family: "Liberation Sans", Arial, sans-serif; font-size: 176.500px; letter-spacing: 0; }
.num { font-size: 178px; }
.findbar {
  position: absolute;
  z-index: 1;
  top: 2px;
  right: 2px;
  display: grid;
  grid-template-columns: 26px 191px 22px 22px 22px 22px;
  align-items: center;
  justify-items: center;
  width: 309px;
  height: 32px;
  background: #f3f3f3;
  border-radius: 2px;
  box-shadow: 0 1px 4px #777;
}
.findbar > .chev { width: 10px; height: 7px; }
.findin {
  display: grid;
  grid-template-columns: 1fr auto 17px 16px;
  align-items: center;
  justify-items: start;
  width: 191px;
  height: 24px;
  padding-left: 3px;
  background: #fff;
  border: 1px solid #aaa;
  border-radius: 2px;
}
.findin em { color: #666; letter-spacing: .3px; }
.findin .red { margin-left: 3px; color: #d32f2f; }
.findin .chev { justify-self: center; }
.vbar { width: 15px; background: #f0f0f0; }
.hbar { display: flex; align-items: center; height: 15px; padding: 0 19px 0 3px; background: #efefef; color: #666; }
.thumb { width: 84px; height: 5px; margin: 0 315px 0 auto; border-radius: 3px; background: #858585; }

/* status bar */
.status { display: flex; height: 31px; }
.status > div { display: grid; align-items: center; justify-items: center; height: 31px; }
.s-left { grid-template-columns: 13px 26px 54px 15px 3px 18px 76px 3px 20px 18px; width: 797px; }
.s-left p { line-height: 12.500px; justify-self: start; }
.wh { letter-spacing: -.42px; }
.s-mid { grid-template-columns: 13px 28px 28px 98px 28px 28px 3px 28px 28px; width: 642px; }
.pageno {
  display: flex;
  align-items: center;
  justify-content: flex-end;
  width: 96px;
  height: 23px;
  padding-right: 3px;
  background: #fafafa;
  border: 1px solid #c4c4c4;
  border-radius: 2px;
  color: #775;
}
.hi { margin-top: -5px; font-size: 11px; }
.s-right { grid-template-columns: 15px 24px 32px 24px 32px 11px 84px 3px 28px 104px 28px 15px 25px 14px 11px; width: 450px; }
.status .sep { height: 28px; }
.mode { display: grid; place-items: center; width: 28px; height: 28px; background: #e5d2a0; border: 1px solid #b9aa84; }
.s-right .combo { width: 82px; }
.expand { display: grid; justify-items: center; align-content: start; width: 11px; height: 31px; padding-top: 1px; background: #e6e6e6; }
```
